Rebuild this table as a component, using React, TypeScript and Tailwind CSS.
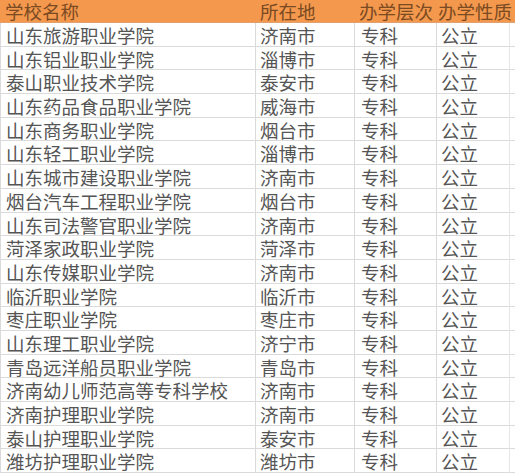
import React from "react";

const rows: [string, string][] = [
  ["山东旅游职业学院", "济南市"],
  ["山东铝业职业学院", "淄博市"],
  ["泰山职业技术学院", "泰安市"],
  ["山东药品食品职业学院", "威海市"],
  ["山东商务职业学院", "烟台市"],
  ["山东轻工职业学院", "淄博市"],
  ["山东城市建设职业学院", "济南市"],
  ["烟台汽车工程职业学院", "烟台市"],
  ["山东司法警官职业学院", "济南市"],
  ["菏泽家政职业学院", "菏泽市"],
  ["山东传媒职业学院", "济南市"],
  ["临沂职业学院", "临沂市"],
  ["枣庄职业学院", "枣庄市"],
  ["山东理工职业学院", "济宁市"],
  ["青岛远洋船员职业学院", "青岛市"],
  ["济南幼儿师范高等专科学校", "济南市"],
  ["济南护理职业学院", "济南市"],
  ["泰山护理职业学院", "泰安市"],
  ["潍坊护理职业学院", "潍坊市"],
];

export default function App() {
  return (
    <div
      className="w-[515px] h-[476px] overflow-hidden bg-white"
      style={{ fontFamily: '"Noto Sans CJK SC", "Noto Sans", sans-serif' }}
    >
      <div className="grid grid-cols-[256px_99px_82px_78px] h-[23px] bg-[#f4984d] text-[#7a4a22] text-[18.5px] leading-[23px] border-b border-[#e0a070]">
        <div className="pl-[5px] whitespace-nowrap">学校名称</div>
        <div className="pl-[4px] whitespace-nowrap">所在地</div>
        <div className="pl-[4px] whitespace-nowrap">办学层次</div>
        <div className="pl-[1px] whitespace-nowrap">办学性质</div>
      </div>
      {rows.map(([name, city], i) => (
        <div
          key={i}
          className="grid grid-cols-[256px_99px_82px_73px_5px] h-[23.7px] text-[18.5px] leading-[24px] text-[#555555] border-b border-[#dadada]"
        >
          <div className="pl-[5px] whitespace-nowrap border-l border-r border-[#dadada]">{name}</div>
          <div className="pl-[4px] whitespace-nowrap border-r border-[#dadada]">{city}</div>
          <div className="pl-[6px] whitespace-nowrap border-r border-[#dadada]">专科</div>
          <div className="pl-[4px] whitespace-nowrap border-r border-[#e6e6e6]">公立</div>
          <div></div>
        </div>
      ))}
    </div>
  );
}
